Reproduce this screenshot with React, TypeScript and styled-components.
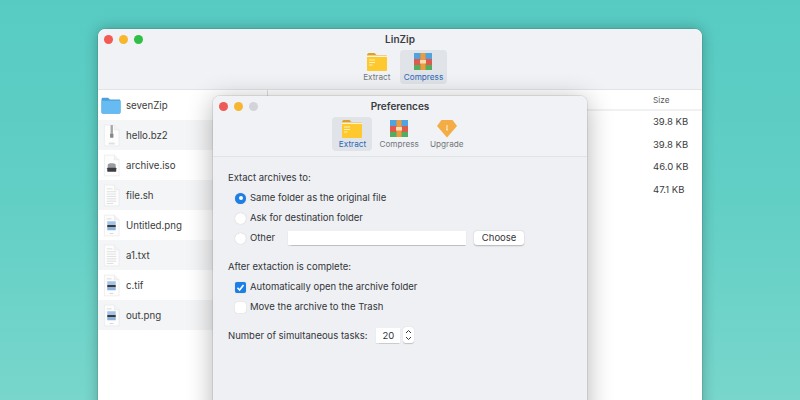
import React from 'react'
import styled, { createGlobalStyle } from 'styled-components'

const GlobalStyle = createGlobalStyle`
  html, body {
    margin: 0;
    padding: 0;
    width: 800px;
    height: 400px;
    overflow: hidden;
    font-family: Inter, "Liberation Sans", sans-serif;
    -webkit-font-smoothing: antialiased;
  }
`

const Desktop = styled.div`
  position: relative;
  width: 800px;
  height: 400px;
  overflow: hidden;
  background: linear-gradient(180deg, #57cbc2 0%, #62cfc5 50%, #78d6cc 100%);
`

const Window = styled.div<{ $left: number; $top: number; $width: number; $deep?: boolean }>`
  position: absolute;
  left: ${p => p.$left}px;
  top: ${p => p.$top}px;
  width: ${p => p.$width}px;
  height: 420px;
  border-radius: 7px 7px 0 0;
  background: #fff;
  overflow: ${p => (p.$deep ? 'visible' : 'hidden')};
  box-shadow: ${p =>
    p.$deep
      ? '0 0 0 1px rgba(0,0,0,0.08), 0 4px 26px rgba(0,0,0,0.3)'
      : '0 0 14px rgba(0,0,0,0.28), 0 0 0 0.5px rgba(0,0,0,0.15)'};
  display: flex;
  flex-direction: column;
`

const TitleBar = styled.header`
  position: relative;
  height: 61px;
  flex: none;
  box-sizing: border-box;
  background: #f0f2f5;
  border-radius: 7px 7px 0 0;
  border-bottom: 1px solid #e2e3e5;
  display: flex;
  flex-direction: column;
  align-items: center;
`

const Lights = styled.div`
  position: absolute;
  left: 6px;
  top: 6px;
  display: flex;
  gap: 6px;
`

const Light = styled.span<{ $color: string }>`
  width: 9px;
  height: 9px;
  border-radius: 50%;
  background: ${p => p.$color};
`

const Title = styled.div`
  margin-top: 4px;
  font-size: 10px;
  line-height: 13px;
  font-weight: 600;
  color: #3a3c40;
`

const Tools = styled.nav<{ $offset: number }>`
  display: flex;
  gap: 3px;
  margin-top: 4px;
  transform: translateX(${p => p.$offset}px);
`

const Tool = styled.div<{ $active?: boolean }>`
  display: flex;
  flex-direction: column;
  align-items: center;
  min-width: 40px;
  height: 34px;
  padding: 2px 4px 0;
  box-sizing: border-box;
  border-radius: 4px;
  background: ${p => (p.$active ? '#e0e3e7' : 'transparent')};
  color: ${p => (p.$active ? '#2a68b8' : '#74777b')};
  font-size: 8.2px;
  line-height: 11px;
  svg {
    display: block;
    flex: none;
    height: 19px;
    margin-bottom: 1px;
  }
`

const Browser = styled.div`
  display: flex;
  flex: 1;
  min-height: 0;
`

const Sidebar = styled.div`
  width: 169px;
  flex: none;
  display: flex;
  flex-direction: column;
`

const FileRow = styled.div<{ $striped: boolean }>`
  height: 30px;
  flex: none;
  display: flex;
  align-items: center;
  gap: 5px;
  padding-left: 3px;
  font-size: 9.7px;
  color: #3a3c40;
  background: ${p => (p.$striped ? '#f4f5f6' : '#fff')};
`

const FileIconSlot = styled.span`
  width: 20px;
  height: 28px;
  flex: none;
  display: flex;
  align-items: center;
  justify-content: center;
`

const Listing = styled.div`
  flex: 1;
  display: flex;
  flex-direction: column;
`

const ListHeader = styled.div`
  height: 21px;
  flex: none;
  box-sizing: border-box;
  display: flex;
  justify-content: flex-end;
  border-left: 1px solid #dcdde0;
  border-bottom: 2px solid #f1f1f3;
  margin-bottom: 0;
`

const SizeHeader = styled.div`
  width: 49px;
  padding-left: 4px;
  font-size: 8.2px;
  line-height: 20px;
  color: #55575b;
`

const SizeColumn = styled.div`
  align-self: flex-end;
  width: 49px;
  padding-left: 4px;
  display: flex;
  flex-direction: column;
`

const SizeCell = styled.div`
  height: 22.5px;
  font-size: 9.5px;
  line-height: 22.5px;
  color: #3a3c40;
`

const Panel = styled.main`
  flex: 1;
  background: #eef0f3;
  padding: 14px 15px;
  display: flex;
  flex-direction: column;
  color: #33353a;
  font-size: 9.5px;
`

const Heading = styled.div<{ $top?: number }>`
  line-height: 14px;
  margin-top: ${p => p.$top ?? 0}px;
`

const OptionList = styled.div`
  display: flex;
  flex-direction: column;
  gap: 6px;
  padding: 6px 0 0 7px;
`

const Option = styled.label`
  display: flex;
  align-items: center;
  height: 14px;
  gap: 4px;
  line-height: 14px;
`

const Radio = styled.span<{ $on?: boolean }>`
  width: 11px;
  height: 11px;
  flex: none;
  border-radius: 50%;
  background: ${p => (p.$on ? '#1c7fe6' : '#fff')};
  box-shadow: 0 0 1px rgba(0, 0, 0, 0.25);
  display: flex;
  align-items: center;
  justify-content: center;
  &::after {
    content: '';
    display: ${p => (p.$on ? 'block' : 'none')};
    width: 4px;
    height: 4px;
    border-radius: 50%;
    background: #fff;
  }
`

const Check = styled.span<{ $on?: boolean }>`
  width: 11px;
  height: 11px;
  flex: none;
  border-radius: 2px;
  background: ${p => (p.$on ? '#1c7fe6' : '#fff')};
  box-shadow: 0 0 1px rgba(0, 0, 0, 0.25);
  display: flex;
  align-items: center;
  justify-content: center;
`

const PathField = styled.span`
  width: 178px;
  height: 14px;
  margin-left: 9px;
  flex: none;
  background: #fff;
  box-shadow: 0 0.5px 1px rgba(0, 0, 0, 0.2);
`

const PushButton = styled.span`
  width: 50px;
  height: 14px;
  margin-left: 4px;
  flex: none;
  border-radius: 3px;
  background: #fff;
  box-shadow: 0 0.5px 1.5px rgba(0, 0, 0, 0.25);
  text-align: center;
  line-height: 14px;
`

const TaskRow = styled.div`
  display: flex;
  align-items: center;
  height: 16px;
  margin-top: 13px;
`

const NumberField = styled.span`
  width: 24px;
  height: 15px;
  margin-left: 9px;
  background: #fff;
  box-shadow: 0 0.5px 1px rgba(0, 0, 0, 0.15);
  text-align: center;
  line-height: 15px;
`

const Stepper = styled.span`
  width: 11px;
  height: 16px;
  margin-left: 3px;
  border-radius: 3px;
  background: #fff;
  box-shadow: 0 0.5px 1px rgba(0, 0, 0, 0.2);
  display: flex;
  align-items: center;
  justify-content: center;
`

const FolderYellow = () => (
  <svg width='22' height='19' viewBox='0 0 22 19'>
    <path d='M1 3.500C1 2.400 1.600 1 3 1h5.500l2 2H20c.7 0 1 .5 1 1v3H1z' fill='#dda126' />
    <rect x='1' y='4' width='20' height='15' rx='.8' fill='#fdc92f' />
    <rect x='1' y='3.400' width='20' height='1.600' fill='#fbfbf5' opacity='.85' />
    <path d='M3 8h6M3 10.500h6M3 13h3.500' stroke='#fff1b5' strokeWidth='1' />
  </svg>
)

const ArchiveBox = () => (
  <svg width='20' height='19' viewBox='0 0 20 19'>
    <rect x='1' y='1' width='18' height='6' fill='#4fa3de' />
    <rect x='1' y='7' width='18' height='6' fill='#de5a4c' />
    <rect x='1' y='13' width='18' height='5' fill='#52ad5f' />
    <rect x='7.500' y='1' width='5' height='17' fill='#ee9b3d' />
    <rect x='7' y='8' width='6' height='3.500' fill='#f4dcb4' />
  </svg>
)

const Gem = () => (
  <svg width='22' height='19' viewBox='0 0 22 19'>
    <path d='M5.500 1h11L21 7 11 18.500 1 7z' fill='#f3ac46' />
    <path d='M11 6v4.500' stroke='#fde6bc' strokeWidth='1.200' />
    <path d='M9.800 10h2.400L11 12z' fill='#fde6bc' />
  </svg>
)

const BlueFolder = () => (
  <svg width='22' height='19' viewBox='0 0 22 19'>
    <path d='M.5 3C.5 1.600 1.200 1 2.200 1h5.600l2 2h10c1.100 0 1.700.7 1.700 1.700V17c0 1-.6 1.600-1.600 1.600H2.100c-1 0-1.600-.6-1.600-1.600z' fill='#4f9fd8' />
    <rect x='.5' y='4.400' width='21' height='13.800' rx='1.200' fill='#66bbf2' />
  </svg>
)

const DocBase = ({ children }: { children?: React.ReactNode }) => (
  <svg width='17' height='23' viewBox='0 0 18 24'>
    <path d='M1.500 1h10.500L17 6v17H1.500z' fill='#fdfdfd' stroke='#e4e5e7' strokeWidth='.6' />
    <path d='M12 1v5h5' fill='#f1f2f3' stroke='#e4e5e7' strokeWidth='.6' />
    {children}
  </svg>
)

const fileGlyphs: Record<string, React.ReactNode> = {
  folder: <BlueFolder />,
  zip: (
    <DocBase>
      <rect x='8' y='1' width='2.500' height='9' fill='#a4a6a9' />
      <rect x='7.500' y='10' width='3.500' height='4.500' rx='.6' fill='#85878a' />
      <rect x='6' y='19.500' width='6.500' height='2' fill='#dfe0e2' />
    </DocBase>
  ),
  disc: (
    <DocBase>
      <path d='M5 16v-4.500C5 10.200 6.500 9.500 9.200 9.500s4.300.7 4.300 2V16z' fill='#9a9ca0' />
      <rect x='4.500' y='14.500' width='9.500' height='4' rx='.5' fill='#3b3d41' />
    </DocBase>
  ),
  text: (
    <DocBase>
      <path d='M4 5h6M4 8h10M4 10.500h10M4 13h10M4 15.500h10M4 18h10M4 20.500h7' stroke='#dddee0' strokeWidth='1' />
    </DocBase>
  ),
  image: (
    <DocBase>
      <path d='M4 5h5' stroke='#d4d7de' strokeWidth='1' />
      <rect x='4.500' y='7.500' width='9' height='4' fill='#a4c3e6' />
      <rect x='4.500' y='11.500' width='9' height='2.500' fill='#34363d' />
      <rect x='4.500' y='14' width='9' height='3' fill='#8db2dc' />
      <path d='M7 20.500h4' stroke='#d4d7de' strokeWidth='1' />
    </DocBase>
  ),
}

const files = [
  { name: 'sevenZip', kind: 'folder' },
  { name: 'hello.bz2', kind: 'zip' },
  { name: 'archive.iso', kind: 'disc' },
  { name: 'file.sh', kind: 'text' },
  { name: 'Untitled.png', kind: 'image' },
  { name: 'a1.txt', kind: 'text' },
  { name: 'c.tif', kind: 'image' },
  { name: 'out.png', kind: 'image' },
]

const sizes = ['39.8 KB', '39.8 KB', '46.0 KB', '47.1 KB']

const App = () => {
  return (
    <Desktop>
      <GlobalStyle />
      <Window $left={98} $top={29} $width={604}>
        <TitleBar>
          <Lights>
            <Light $color='#f25a52' />
            <Light $color='#f8b62d' />
            <Light $color='#2fc045' />
          </Lights>
          <Title>LinZip</Title>
          <Tools $offset={2}>
            <Tool>
              <FolderYellow />
              Extract
            </Tool>
            <Tool $active>
              <ArchiveBox />
              Compress
            </Tool>
          </Tools>
        </TitleBar>
        <Browser>
          <Sidebar>
            {files.map((file, index) => (
              <FileRow key={file.name} $striped={index % 2 === 1}>
                <FileIconSlot>{fileGlyphs[file.kind]}</FileIconSlot>
                {file.name}
              </FileRow>
            ))}
          </Sidebar>
          <Listing>
            <ListHeader>
              <SizeHeader>Size</SizeHeader>
            </ListHeader>
            <SizeColumn>
              {sizes.map((size, index) => (
                <SizeCell key={index}>{size}</SizeCell>
              ))}
            </SizeColumn>
          </Listing>
        </Browser>
      </Window>

      <Window $left={213} $top={96} $width={374} $deep>
        <TitleBar>
          <Lights>
            <Light $color='#ee5a55' />
            <Light $color='#f6b62f' />
            <Light $color='#d3d4d8' />
          </Lights>
          <Title>Preferences</Title>
          <Tools $offset={0}>
            <Tool $active>
              <FolderYellow />
              Extract
            </Tool>
            <Tool>
              <ArchiveBox />
              Compress
            </Tool>
            <Tool>
              <Gem />
              Upgrade
            </Tool>
          </Tools>
        </TitleBar>
        <Panel>
          <Heading>Extact archives to:</Heading>
          <OptionList>
            <Option>
              <Radio $on />
              Same folder as the original file
            </Option>
            <Option>
              <Radio />
              Ask for destination folder
            </Option>
            <Option>
              <Radio />
              Other
              <PathField />
              <PushButton>Choose</PushButton>
            </Option>
          </OptionList>
          <Heading $top={15}>After extaction is complete:</Heading>
          <OptionList>
            <Option>
              <Check $on>
                <svg width='9' height='9' viewBox='0 0 8 8'>
                  <path d='M1.300 4.200l1.900 2 3.500-4.500' fill='none' stroke='#fff' strokeWidth='1.400' />
                </svg>
              </Check>
              Automatically open the archive folder
            </Option>
            <Option>
              <Check />
              Move the archive to the Trash
            </Option>
          </OptionList>
          <TaskRow>
            Number of simultaneous tasks:
            <NumberField>20</NumberField>
            <Stepper>
              <svg width='7' height='12' viewBox='0 0 7 12'>
                <path d='M1 4l2.500-2.500L6 4M1 8l2.500 2.500L6 8' fill='none' stroke='#3a3c40' strokeWidth='1' />
              </svg>
            </Stepper>
          </TaskRow>
        </Panel>
      </Window>
    </Desktop>
  )
}

export default App
